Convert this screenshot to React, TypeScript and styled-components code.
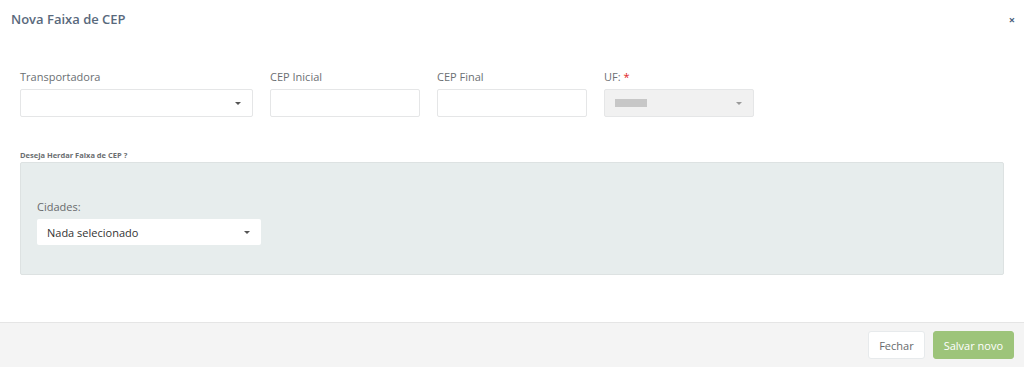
import React from 'react';
import styled, { createGlobalStyle } from 'styled-components';

const GlobalStyle = createGlobalStyle`
  html, body {
    margin: 0;
    padding: 0;
    background: #ffffff;
    font-family: "Open Sans", "Liberation Sans", sans-serif;
  }
`;

const Modal = styled.div`
  width: 1024px;
  height: 367px;
  display: flex;
  flex-direction: column;
  background: #ffffff;
`;

const Header = styled.div`
  display: flex;
  justify-content: space-between;
  align-items: center;
  height: 38px;
  padding: 0 9px 0 11px;
`;

const Title = styled.h4`
  margin: 0;
  font-size: 13px;
  font-weight: 600;
  color: #59697c;
`;

const Close = styled.span`
  font-size: 11px;
  font-weight: 700;
  color: #4a5f7c;
  line-height: 1;
`;

const Body = styled.div`
  flex: 1;
  padding: 32px 20px 0 20px;
`;

const Row = styled.div`
  display: flex;
  gap: 17px;
`;

const Field = styled.div<{ $w: number }>`
  display: flex;
  flex-direction: column;
  width: ${p => p.$w}px;
`;

const Label = styled.label`
  font-size: 11px;
  color: #6b6f73;
  height: 13px;
  line-height: 13px;
  margin-bottom: 6px;
`;

const Required = styled.span`
  color: #e02424;
  margin-left: 3px;
`;

const Input = styled.div<{ $disabled?: boolean }>`
  box-sizing: border-box;
  height: 28px;
  border: 1px solid #e5e6e7;
  border-radius: 2px;
  background: ${p => (p.$disabled ? '#f1f1f1' : '#ffffff')};
  display: flex;
  align-items: center;
  justify-content: space-between;
  padding: 0 11px 0 10px;
`;

const Caret = styled.span<{ $muted?: boolean }>`
  width: 0;
  height: 0;
  border-left: 3px solid transparent;
  border-right: 3px solid transparent;
  border-top: 3px solid ${p => (p.$muted ? '#9a9a9a' : '#555')};
`;

const Placeholder = styled.span`
  width: 32px;
  height: 8px;
  background: #c7c7c7;
`;

const SectionTitle = styled.div`
  margin-top: 33px;
  font-size: 7.5px;
  font-weight: 700;
  color: #6a6d70;
  height: 10px;
  line-height: 10px;
`;

const Panel = styled.div`
  box-sizing: border-box;
  height: 113px;
  margin-top: 2px;
  background: #e7eded;
  border: 1px solid #dde2e2;
  border-radius: 2px;
  padding: 37px 16px 0 16px;
`;

const PanelLabel = styled.div`
  font-size: 11px;
  color: #676a6c;
  height: 14px;
  line-height: 14px;
  margin-bottom: 5px;
`;

const CitySelect = styled.div`
  box-sizing: border-box;
  width: 224px;
  height: 26px;
  background: #ffffff;
  border-radius: 2px;
  display: flex;
  align-items: center;
  justify-content: space-between;
  padding: 0 11px 0 10px;
  font-size: 11px;
  color: #333;
`;

const Footer = styled.div`
  height: 45px;
  box-sizing: border-box;
  background: #f4f4f4;
  border-top: 1px solid #e5e5e5;
  display: flex;
  justify-content: flex-end;
  align-items: center;
  gap: 8px;
  padding: 0 10px 0 0;
`;

const Button = styled.button<{ $primary?: boolean }>`
  height: 28px;
  border-radius: 3px;
  font-family: inherit;
  font-size: 11px;
  padding: 0 10px;
  border: 1px solid ${p => (p.$primary ? '#9dc47a' : '#e7eaec')};
  background: ${p => (p.$primary ? '#9dc47a' : '#ffffff')};
  color: ${p => (p.$primary ? '#ffffff' : '#676a6c')};
`;

export default function App() {
  return (
    <Modal>
      <GlobalStyle />
      <Header>
        <Title>Nova Faixa de CEP</Title>
        <Close>×</Close>
      </Header>
      <Body>
        <Row>
          <Field $w={233}>
            <Label>Transportadora</Label>
            <Input>
              <span />
              <Caret />
            </Input>
          </Field>
          <Field $w={150}>
            <Label>CEP Inicial</Label>
            <Input />
          </Field>
          <Field $w={150}>
            <Label>CEP Final</Label>
            <Input />
          </Field>
          <Field $w={150}>
            <Label>
              UF:<Required>*</Required>
            </Label>
            <Input $disabled>
              <Placeholder />
              <Caret $muted />
            </Input>
          </Field>
        </Row>
        <SectionTitle>Deseja Herdar Faixa de CEP ?</SectionTitle>
        <Panel>
          <PanelLabel>Cidades:</PanelLabel>
          <CitySelect>
            <span>Nada selecionado</span>
            <Caret />
          </CitySelect>
        </Panel>
      </Body>
      <Footer>
        <Button>Fechar</Button>
        <Button $primary>Salvar novo</Button>
      </Footer>
    </Modal>
  );
}
